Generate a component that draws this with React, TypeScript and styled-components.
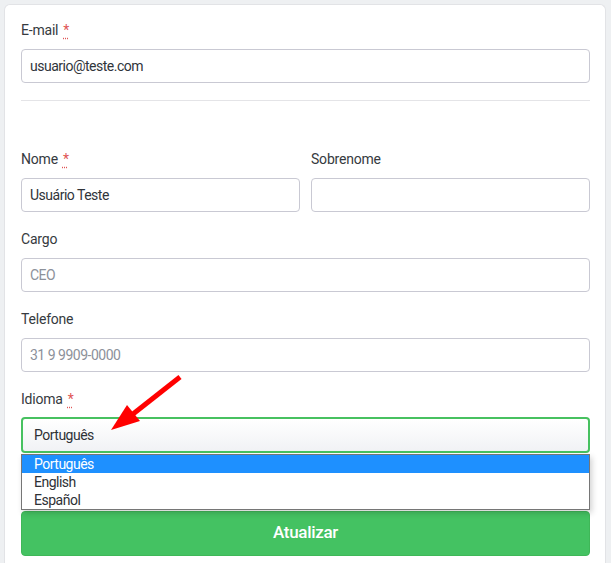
import React from "react";
import styled, { createGlobalStyle } from "styled-components";

const GlobalStyle = createGlobalStyle`
  html, body { margin: 0; padding: 0; background: #eef0f2; }
  body { font-family: Roboto, "Noto Sans", sans-serif; color: #363a40; }
  * { box-sizing: border-box; }
`;

const Page = styled.div`
  padding: 4px 5px 0 4px;
  height: 563px;
  overflow: hidden;
`;

const Card = styled.div`
  background: #fff;
  border: 1px solid #e2e3e6;
  border-bottom: none;
  border-radius: 6px 6px 0 0;
  padding: 15px 15px 40px 16px;
  min-height: 600px;
`;

const Group = styled.div<{ $mb?: number }>`
  position: relative;
  margin-bottom: ${(p) => (p.$mb ?? 17)}px;
`;

const Row = styled.div`
  display: grid;
  grid-template-columns: 1fr 1fr;
  column-gap: 11px;
`;

const Label = styled.label<{ $mb?: number }>`
  display: block;
  font-size: 14px;
  line-height: 20px;
  margin-bottom: ${(p) => (p.$mb ?? 9)}px;
  color: #363a40;
  letter-spacing: -0.2px;
`;

const Req = styled.abbr`
  color: #e05555;
  text-decoration: underline dotted;
  text-underline-offset: 3px;
  margin-left: 5px;
  cursor: help;
`;

const Input = styled.input`
  display: block;
  width: 100%;
  height: 34px;
  border: 1px solid #c9c9d3;
  border-radius: 4px;
  padding: 0 8px;
  font-family: Roboto, "Noto Sans", sans-serif;
  font-size: 14px;
  color: #30343a;
  letter-spacing: -0.5px;
  background: #fff;
  outline: none;
  &::placeholder { color: #8c919a; }
`;

const Divider = styled.hr`
  border: none;
  border-top: 1px solid #e4e4e7;
  margin: 0 0 48px;
`;

const SelectBox = styled.div`
  height: 36px;
  border: 2px solid #47c160;
  border-radius: 4px;
  background: linear-gradient(#ffffff, #f1f2f5);
  padding: 0 11px;
  display: flex;
  align-items: center;
  font-size: 14px;
  letter-spacing: -0.5px;
  color: #2e3136;
`;

const Listbox = styled.ul`
  position: absolute;
  left: 0;
  right: 0;
  top: 65px;
  margin: 0;
  padding: 0;
  list-style: none;
  background: #fff;
  border: 1px solid #767676;
  box-shadow: 2px 3px 6px rgba(0, 0, 0, 0.18);
  z-index: 5;
`;

const Option = styled.li<{ $active?: boolean }>`
  height: 18px;
  line-height: 18px;
  padding-left: 12px;
  font-size: 14px;
  letter-spacing: -0.5px;
  color: ${(p) => (p.$active ? "#fff" : "#2e3136")};
  background: ${(p) => (p.$active ? "#1e90ff" : "transparent")};
`;

const Button = styled.button`
  display: block;
  width: 100%;
  height: 45px;
  border: 1px solid #3fb758;
  border-radius: 4px;
  background: #44c262;
  color: #fff;
  font-family: Roboto, "Noto Sans", sans-serif;
  font-size: 17px;
  font-weight: 500;
  letter-spacing: -0.3px;
  padding: 0 0 3px;
`;

const Arrow = styled.svg`
  position: absolute;
  left: 90px;
  top: -12px;
  overflow: visible;
  pointer-events: none;
  z-index: 6;
`;

export default function App() {
  return (
    <>
      <GlobalStyle />
      <Page>
        <Card>
          <Group>
            <Label>
              E-mail<Req title="obrigatório">*</Req>
            </Label>
            <Input defaultValue="usuario@teste.com" />
          </Group>
          <Divider />
          <Row>
            <Group>
              <Label>
                Nome<Req title="obrigatório">*</Req>
              </Label>
              <Input defaultValue="Usuário Teste" />
            </Group>
            <Group>
              <Label>Sobrenome</Label>
              <Input defaultValue="" />
            </Group>
          </Row>
          <Group>
            <Label>Cargo</Label>
            <Input placeholder="CEO" />
          </Group>
          <Group>
            <Label>Telefone</Label>
            <Input placeholder="31 9 9909-0000" />
          </Group>
          <Group $mb={58}>
            <Label $mb={8}>
              Idioma<Req title="obrigatório">*</Req>
            </Label>
            <SelectBox>Português</SelectBox>
            <Listbox>
              <Option $active>Português</Option>
              <Option>English</Option>
              <Option>Español</Option>
            </Listbox>
            <Arrow width="70" height="56" viewBox="0 0 70 56">
              <line x1="69" y1="0" x2="22" y2="37" stroke="#f00" strokeWidth="5" strokeLinecap="butt" />
              <polygon points="0,53 16,28 29,44" fill="#f00" />
            </Arrow>
          </Group>
          <Button>Atualizar</Button>
        </Card>
      </Page>
    </>
  );
}
